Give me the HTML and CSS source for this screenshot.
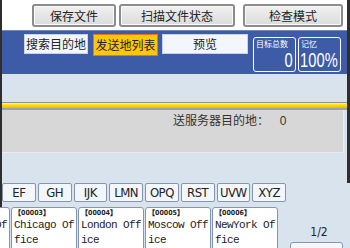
FILE: index.html
```html
<!DOCTYPE html>
<html lang="zh-cn">
<head>
    <meta charset="UTF-8">
    <title>扫描到文件夹</title>
    <link rel="stylesheet" href="styles.css">
</head>
<body>
    <div class="screen">
        <div class="upper">
            <div class="header">
                <button class="top-btn save">保存文件</button>
                <button class="top-btn status">扫描文件状态</button>
                <button class="top-btn check">检查模式</button>
            </div>

            <div class="band">
                <div class="tab search">搜索目的地</div>
                <div class="tab active">发送地列表</div>
                <div class="tab preview">预览</div>
                <div class="counter first">
                    <span class="counter-label">目标总数</span>
                    <div class="counter-row"><span class="counter-value">0</span></div>
                </div>
                <div class="counter">
                    <span class="counter-label">记忆</span>
                    <div class="counter-row"><span class="counter-value">100%</span></div>
                </div>
            </div>

            <div class="spacer"></div>
            <div class="stripe"></div>

            <div class="panel">
                <span class="panel-text">送服务器目的地：</span>
                <span class="panel-num">0</span>
            </div>
            <div class="spacer low"></div>
        </div>

        <div class="lower">
            <div class="list">
                <div class="letters">
                    <button class="letter">EF</button>
                    <button class="letter">GH</button>
                    <button class="letter">IJK</button>
                    <button class="letter">LMN</button>
                    <button class="letter">OPQ</button>
                    <button class="letter">RST</button>
                    <button class="letter">UVW</button>
                    <button class="letter">XYZ</button>
                </div>
                <div class="cards">
                    <div class="card">
                        <div class="card-no">【00002】</div>
                        <div class="card-name">Beijing Of f</div>
                        <div class="card-name">ice</div>
                    </div>
                    <div class="card">
                        <div class="card-no">【00003】</div>
                        <div class="card-name">Chicago Of</div>
                        <div class="card-name">fice</div>
                    </div>
                    <div class="card">
                        <div class="card-no">【00004】</div>
                        <div class="card-name">London Off</div>
                        <div class="card-name">ice</div>
                    </div>
                    <div class="card">
                        <div class="card-no">【00005】</div>
                        <div class="card-name">Moscow Off</div>
                        <div class="card-name">ice</div>
                    </div>
                    <div class="card">
                        <div class="card-no">【00006】</div>
                        <div class="card-name">NewYork Of</div>
                        <div class="card-name">fice</div>
                    </div>
                </div>
            </div>
            <div class="pager">
                <div class="page-num">1/2</div>
                <div class="page-btn"></div>
            </div>
        </div>
    </div>
</body>
</html>
```

FILE: styles.css
```css
body {
    margin: 0;
    width: 350px;
    height: 248px;
    overflow: hidden;
    background-color: #d9e3ee;
    font-family: "Noto Sans CJK SC", "DejaVu Sans", sans-serif;
    color: #222;
}

.screen {
    height: 248px;
    border-left: 2px solid #2e2e2e;
}

.upper {
    border-right: 3px solid #2e2e2e;
}

/* top row of buttons */
.header {
    display: flex;
    height: 30px;
    padding-left: 30px;
    background-color: #ffffff;
    box-sizing: border-box;
    padding-top: 4px;
}

.top-btn {
    height: 23px;
    margin: 0;
    padding: 0;
    border: 2px solid #8c8c8c;
    border-radius: 3px;
    background: linear-gradient(#f0f0f0, #dcdcdc);
    box-shadow: inset 0 0 0 1px #fafafa;
    font-family: "Noto Sans CJK SC", sans-serif;
    font-size: 12px;
    line-height: 19px;
    color: #222;
}

.save {
    width: 84px;
}

.status {
    width: 116px;
    margin-left: 3px;
}

.check {
    width: 100px;
    margin-left: 8px;
}

/* blue band with tabs and counters */
.band {
    display: flex;
    align-items: flex-start;
    height: 44px;
    padding-left: 22px;
    background-color: #3d5ba6;
    border-top: 1px solid #7088c0;
    box-sizing: border-box;
}

.tab {
    height: 20px;
    margin-top: 3px;
    background-color: #f3f6fb;
    border: 1px solid #c9d3e6;
    box-sizing: border-box;
    font-size: 12px;
    line-height: 18px;
    text-align: center;
    color: #222;
}

.search {
    width: 64px;
}

.active {
    width: 65px;
    height: 22px;
    margin-left: 5px;
    background-color: #ffc60a;
    border-color: #e4761b;
    line-height: 20px;
}

.preview {
    width: 86px;
    margin-left: 4px;
}

.counter {
    display: flex;
    flex-direction: column;
    justify-content: space-between;
    width: 43px;
    height: 35px;
    margin-top: 6px;
    margin-left: 2px;
    border: 1px solid #ffffff;
    border-radius: 3px;
    box-sizing: border-box;
    color: #ffffff;
}

.counter.first {
    margin-left: 5px;
}

.counter-label {
    font-size: 8px;
    line-height: 10px;
    padding-left: 2px;
    margin-top: 1px;
}

.counter-row {
    display: flex;
    justify-content: flex-end;
    padding-right: 2px;
    margin-bottom: 1px;
}

.counter-value {
    flex: none;
    font-family: "Liberation Sans", sans-serif;
    font-size: 21px;
    line-height: 20px;
    transform: scaleX(0.7);
    transform-origin: right center;
}

.spacer {
    height: 28px;
}

.spacer.low {
    height: 30px;
}

/* yellow separator */
.stripe {
    height: 8px;
    border-top: 1px solid #8a929c;
    border-bottom: 2px solid #a2a2a2;
    background: linear-gradient(#fff59a, #ffe000 40%, #f2b800);
    box-sizing: border-box;
}

.panel {
    height: 43px;
    margin-right: 3px;
    padding-left: 171px;
    background-color: #d7d7d7;
    border-bottom: 1px solid #ececec;
    border-right: 1px solid #ececec;
    box-sizing: border-box;
    font-size: 12px;
    line-height: 20px;
    color: #333;
}

.panel-num {
    margin-left: 8px;
    font-family: "Liberation Sans", sans-serif;
}

/* address list */
.lower {
    display: flex;
}

.list {
    width: 284px;
}

.letters {
    display: grid;
    grid-template-columns: repeat(8, 1fr);
    gap: 2px;
    height: 19px;
}

.letter {
    margin: 0;
    padding: 0;
    height: 19px;
    background-color: #f3f6fa;
    border: 1px solid #8196b2;
    border-radius: 2px;
    font-family: "DejaVu Sans Condensed", "Liberation Sans", sans-serif;
    font-size: 13px;
    letter-spacing: -0.5px;
    color: #222;
}

.cards {
    display: flex;
    gap: 1px;
    margin-top: 5px;
    margin-left: -58px;
}

.card {
    flex: none;
    width: 66px;
    height: 50px;
    padding-left: 2px;
    background-color: #ffffff;
    border: 1px solid #8196b2;
    border-radius: 3px 3px 0 0;
    box-sizing: border-box;
    overflow: hidden;
}

.card-no {
    font-family: "DejaVu Sans Condensed", sans-serif;
    font-size: 7px;
    line-height: 10px;
    font-weight: bold;
}

.card-name {
    font-family: "Liberation Mono", monospace;
    font-size: 11px;
    letter-spacing: -0.6px;
    line-height: 15px;
    white-space: nowrap;
}

.pager {
    width: 58px;
    margin-left: 4px;
    padding-top: 41px;
}

.page-num {
    font-family: "DejaVu Sans Condensed", sans-serif;
    font-size: 12px;
    line-height: 16px;
    text-align: center;
}

.page-btn {
    width: 53px;
    height: 20px;
    margin-top: 2px;
    background-color: #f5f7fa;
    border: 1px solid #8196b2;
    border-radius: 3px 3px 0 0;
    box-sizing: border-box;
}
```
